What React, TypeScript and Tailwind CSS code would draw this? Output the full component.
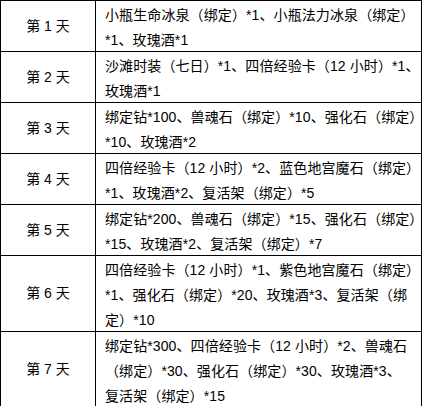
const rows = [
  { day: '第 1 天', lines: ['小瓶生命冰泉（绑定）*1、小瓶法力冰泉（绑定）', '*1、玫瑰酒*1'] },
  { day: '第 2 天', lines: ['沙滩时装（七日）*1、四倍经验卡（12 小时）*1、', '玫瑰酒*1'] },
  { day: '第 3 天', lines: ['绑定钻*100、兽魂石（绑定）*10、强化石（绑定）', '*10、玫瑰酒*2'] },
  { day: '第 4 天', lines: ['四倍经验卡（12 小时）*2、蓝色地宫魔石（绑定）', '*1、玫瑰酒*2、复活架（绑定）*5'] },
  { day: '第 5 天', lines: ['绑定钻*200、兽魂石（绑定）*15、强化石（绑定）', '*15、玫瑰酒*2、复活架（绑定）*7'] },
  {
    day: '第 6 天',
    lines: ['四倍经验卡（12 小时）*1、紫色地宫魔石（绑定）', '*1、强化石（绑定）*20、玫瑰酒*3、复活架（绑', '定）*10'],
  },
  {
    day: '第 7 天',
    lines: ['绑定钻*300、四倍经验卡（12 小时）*2、兽魂石', '（绑定）*30、强化石（绑定）*30、玫瑰酒*3、', '复活架（绑定）*15'],
  },
]

export default function App() {
  return (
    <div
      className="bg-white w-[424px] h-[406px] text-[14px] text-black"
      style={{ fontFamily: '"Liberation Sans", "Noto Sans CJK SC", sans-serif' }}
    >
      <div className="w-[422px] border-t border-l border-black grid grid-cols-[95px_326px]">
        {rows.map((r) => (
          <div key={r.day} className="contents">
            <div className="border-r border-b border-black flex items-center justify-center leading-[29px]">
              {r.day}
            </div>
            <div className="border-r border-b border-black pl-[9px] tracking-[0.1px]">
              {r.lines.map((l, i) => (
                <div key={i} className="whitespace-nowrap h-[25px] leading-[29px]">
                  {l}
                </div>
              ))}
            </div>
          </div>
        ))}
      </div>
    </div>
  )
}
